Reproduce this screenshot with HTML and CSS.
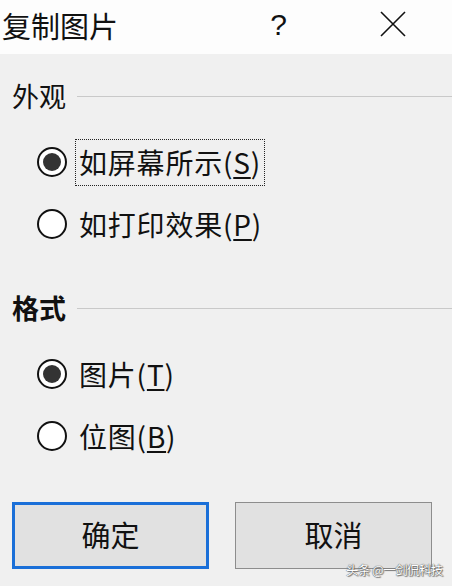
FILE: index.html
```html
<!DOCTYPE html>
<html lang="zh-CN">
<head>
	<meta charset="UTF-8">
	<title>复制图片</title>
	<link rel="stylesheet" href="styles.css">
</head>
<body>
	<div class="dialog">
		<div class="titlebar">
			<span class="title">复制图片</span>
			<span class="help">?</span>
			<svg class="close" width="26" height="26" viewBox="0 0 26 26">
				<path d="M1 1 L25 25 M25 1 L1 25" stroke="#111" stroke-width="1.6" fill="none"/>
			</svg>
		</div>

		<div class="content">
			<div class="group-head">
				<span class="group-label">外观</span>
				<span class="group-line"></span>
			</div>
			<div class="group-body">
				<div class="radio-row">
					<span class="radio checked"></span>
					<span class="radio-text focus">如屏幕所示(<u>S</u>)</span>
				</div>
				<div class="radio-row">
					<span class="radio"></span>
					<span class="radio-text">如打印效果(<u>P</u>)</span>
				</div>
			</div>

			<div class="group-head second">
				<span class="group-label bold">格式</span>
				<span class="group-line"></span>
			</div>
			<div class="group-body">
				<div class="radio-row">
					<span class="radio checked"></span>
					<span class="radio-text">图片(<u>T</u>)</span>
				</div>
				<div class="radio-row">
					<span class="radio"></span>
					<span class="radio-text">位图(<u>B</u>)</span>
				</div>
			</div>

			<div class="buttons">
				<button class="btn default" type="button">确定</button>
				<button class="btn" type="button">取消</button>
			</div>
		</div>
		<span class="watermark">头条 @一剑侃科技</span>
	</div>
</body>
</html>
```

FILE: styles.css
```css
body
{
	margin: 0;
	background-color: #f0f0f0;
	font-family: "Noto Sans CJK SC", "Noto Sans", sans-serif;
	color: #111;
}

.dialog
{
	position: relative;
	width: 452px;
	height: 586px;
	overflow: hidden;
}

.titlebar
{
	height: 54px;
	background-color: #fdfdfd;
	display: flex;
	align-items: center;
	padding-left: 2px;
}

.title
{
	font-size: 29px;
	line-height: 1;
	margin-top: -4px;
	flex: 1;
}

.help
{
	font-family: "Liberation Sans", sans-serif;
	font-size: 30px;
	margin-right: 93px;
	margin-top: -4px;
}

.close
{
	margin-right: 46px;
	margin-top: -6px;
}

.content
{
	padding: 22px 20px 0 12px;
}

.group-head
{
	height: 40px;
	display: flex;
	align-items: center;
}

.group-head.second
{
	margin-top: 33px;
}

.group-label
{
	font-size: 27px;
	line-height: 1;
	margin-top: -2px;
}

.bold { font-weight: bold; }

.group-line
{
	flex: 1;
	height: 1px;
	background-color: #c9c9c9;
	margin-left: 11px;
	margin-right: -20px;
}

.group-body
{
	padding-top: 15px;
}

.radio-row
{
	height: 62px;
	display: flex;
	align-items: center;
	padding-left: 25px;
}

.radio
{
	box-sizing: border-box;
	width: 30px;
	height: 30px;
	border: 2px solid #111;
	border-radius: 50%;
	background-color: #fff;
	display: flex;
	align-items: center;
	justify-content: center;
	margin-right: 8px;
}

.radio.checked::after
{
	content: "";
	width: 18px;
	height: 18px;
	border-radius: 50%;
	background-color: #333;
}

.radio-text
{
	font-size: 28px;
	line-height: 1;
	padding: 8px 3px 9px 3px;
	border: 1px dotted transparent;
	letter-spacing: 0.8px;
}

.radio-text u
{
	text-underline-offset: 3px;
}

.radio-text.focus
{
	border-color: #222;
}

.buttons
{
	margin-top: 35px;
	display: flex;
	justify-content: space-between;
}

.btn
{
	box-sizing: border-box;
	width: 197px;
	height: 67px;
	background-color: #e1e1e1;
	border: 1px solid #8d8d8d;
	font-family: "Noto Sans CJK SC", sans-serif;
	font-size: 29px;
	color: #111;
	padding: 0 0 4px 0;
}

.btn.default
{
	border: 3px solid #1a6fd8;
}

.watermark
{
	position: absolute;
	left: 346px;
	top: 560px;
	font-size: 12.5px;
	white-space: nowrap;
	color: #fff;
	letter-spacing: -0.6px;
	text-shadow: 0 0 1px #555, 0 0 1px #555, 1px 1px 1px #777;
}
```
